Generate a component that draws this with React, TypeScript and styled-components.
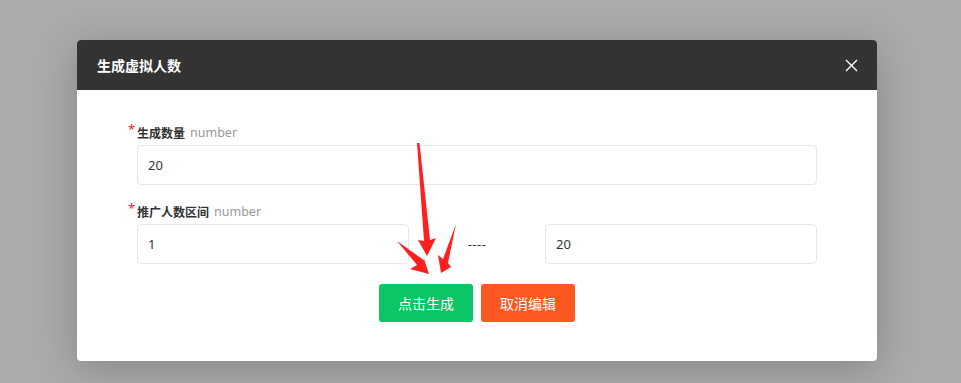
import styled, { createGlobalStyle } from 'styled-components'

const GlobalStyle = createGlobalStyle`
  html, body {
    margin: 0;
    padding: 0;
    background: #ababab;
    font-family: "Noto Sans", "Noto Sans CJK SC", sans-serif;
  }
  * { box-sizing: border-box; }
`

const Page = styled.div`
  width: 961px;
  height: 383px;
  padding: 40px 0 0 77px;
  display: flex;
  align-items: flex-start;
`

const Modal = styled.div`
  position: relative;
  width: 800px;
  background: #fff;
  border-radius: 4px;
  box-shadow: 0 8px 40px rgba(0, 0, 0, 0.22);
`

const Header = styled.div`
  height: 50px;
  background: #333333;
  border-radius: 4px 4px 0 0;
  display: flex;
  align-items: center;
  justify-content: space-between;
  padding: 0 18px 0 20px;
`

const Title = styled.h3`
  margin: 0;
  color: #fff;
  font-size: 14px;
  font-weight: 700;
  font-family: "Noto Sans CJK SC", sans-serif;
`

const Close = styled.button`
  border: 0;
  background: none;
  padding: 0;
  width: 16px;
  height: 16px;
  display: flex;
  align-items: center;
  justify-content: center;
  cursor: pointer;
`

const Body = styled.div`
  padding: 33px 60px 39px;
`

const FormItem = styled.div`
  margin-bottom: 17px;
`

const Label = styled.div`
  position: relative;
  height: 20px;
  line-height: 20px;
  margin-bottom: 2px;
  display: flex;
  align-items: center;
  gap: 5px;

  &::before {
    content: '*';
    position: absolute;
    left: -9px;
    top: -4px;
    color: #f5222d;
    font-size: 13px;
  }
`

const LabelText = styled.span`
  color: #333;
  font-size: 12px;
  font-weight: 700;
  font-family: "Noto Sans CJK SC", sans-serif;
`

const Hint = styled.span`
  color: #999;
  font-size: 12.5px;
  font-weight: 400;
`

const Input = styled.input`
  width: 100%;
  height: 40px;
  border: 1px solid #e6e6ec;
  border-radius: 4px;
  padding: 0 10px;
  font-size: 13px;
  color: #333;
  font-family: "Noto Sans", sans-serif;
  outline: none;
  background: #fff;
`

const Range = styled.div`
  display: grid;
  grid-template-columns: 2fr 1fr 2fr;
  align-items: center;
`

const Dash = styled.span`
  text-align: center;
  color: #333;
  font-size: 13px;
  letter-spacing: 0.5px;
`

const Actions = styled.div`
  display: flex;
  justify-content: center;
  gap: 8px;
  padding-top: 3px;
`

const Button = styled.button<{ $tone: 'go' | 'cancel' }>`
  width: 94px;
  height: 38px;
  border: 0;
  border-radius: 3px;
  color: #fff;
  font-size: 14px;
  font-family: "Noto Sans CJK SC", sans-serif;
  background: ${p => (p.$tone === 'go' ? '#0bc566' : '#ff5722')};
  cursor: pointer;
`

const Arrows = styled.svg`
  position: absolute;
  left: 0;
  top: 0;
  pointer-events: none;
`

// offsets relative to the modal box (77, 40)
const ox = 77
const oy = 40
const pts = (list: number[][]) => list.map(([x, y]) => `${x - ox},${y - oy}`).join(' ')

export default function App() {
  return (
    <>
      <GlobalStyle />
      <Page>
        <Modal>
          <Header>
            <Title>生成虚拟人数</Title>
            <Close aria-label="close">
              <svg width="13" height="13" viewBox="0 0 13 13">
                <path d="M1 1L12 12M12 1L1 12" stroke="#fff" strokeWidth="1.4" />
              </svg>
            </Close>
          </Header>
          <Body>
            <FormItem>
              <Label>
                <LabelText>生成数量</LabelText>
                <Hint>number</Hint>
              </Label>
              <Input defaultValue="20" />
            </FormItem>
            <FormItem>
              <Label>
                <LabelText>推广人数区间</LabelText>
                <Hint>number</Hint>
              </Label>
              <Range>
                <Input defaultValue="1" />
                <Dash>----</Dash>
                <Input defaultValue="20" />
              </Range>
            </FormItem>
            <Actions>
              <Button $tone="go">点击生成</Button>
              <Button $tone="cancel">取消编辑</Button>
            </Actions>
          </Body>
          <Arrows width="800" height="321" viewBox="0 0 800 321">
            <polygon
              fill="#ff1f1f"
              points={pts([
                [417, 143],
                [419.5, 143],
                [430, 240],
                [436, 238],
                [427, 256],
                [418, 240],
                [424, 241],
              ])}
            />
            <polygon
              fill="#ff1f1f"
              points={pts([
                [397, 241],
                [425, 261],
                [423, 256],
                [429, 274],
                [410, 269],
                [417, 265],
              ])}
            />
            <polygon
              fill="#ff1f1f"
              points={pts([
                [456, 224],
                [448, 263],
                [451, 267],
                [441, 273],
                [438, 255],
                [443, 259],
              ])}
            />
          </Arrows>
        </Modal>
      </Page>
    </>
  )
}
